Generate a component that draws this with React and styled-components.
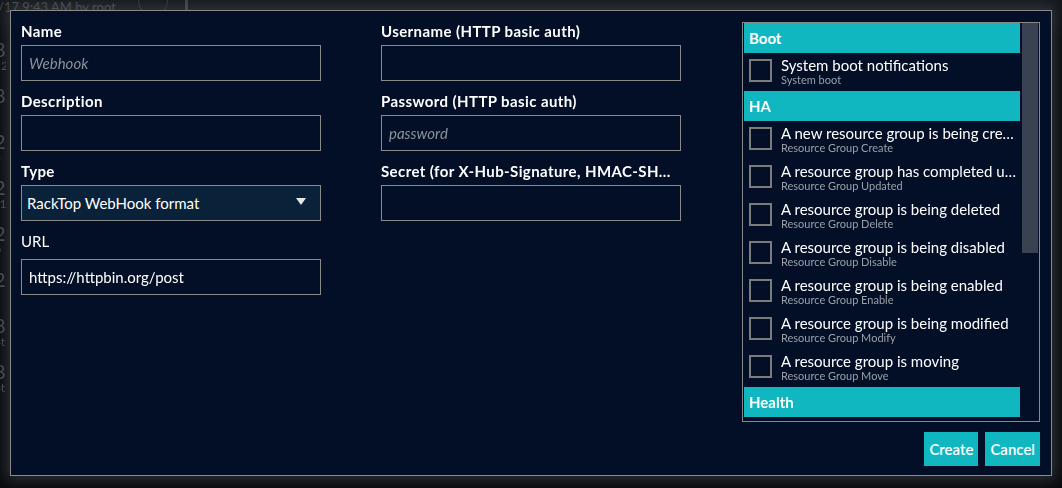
import React from "react";
import styled, { createGlobalStyle } from "styled-components";

const COLORS = {
  page: "#07090d",
  panel: "#020f27",
  field: "#0a213a",
  border: "#8a8a8a",
  teal: "#10b7c0",
  text: "#ffffff",
  muted: "#9aa0a8",
  placeholder: "#8c929b",
};

const FONT = `"Lato", "Noto Sans", "Liberation Sans", sans-serif`;

const GlobalStyle = createGlobalStyle`
  html, body {
    margin: 0;
    padding: 0;
    background: ${COLORS.page};
  }
  * { box-sizing: border-box; }
`;

const SECTIONS = [
  {
    title: "Boot",
    items: [{ title: "System boot notifications", sub: "System boot" }],
  },
  {
    title: "HA",
    items: [
      { title: "A new resource group is being created", sub: "Resource Group Create" },
      { title: "A resource group has completed updating", sub: "Resource Group Updated" },
      { title: "A resource group is being deleted", sub: "Resource Group Delete" },
      { title: "A resource group is being disabled", sub: "Resource Group Disable" },
      { title: "A resource group is being enabled", sub: "Resource Group Enable" },
      { title: "A resource group is being modified", sub: "Resource Group Modify" },
      { title: "A resource group is moving", sub: "Resource Group Move" },
    ],
  },
  {
    title: "Health",
    items: [{ title: "Pool health changed", sub: "Pool Health" }],
  },
];

const BACKDROP_ROWS = [
  ["8", "22"],
  ["8", "y r"],
  ["29", "3"],
  ["29", "/1"],
  ["29", "0 /"],
  ["29", "y r"],
  ["8", "ot"],
  ["8", "ot"],
];

const App = () => (
  <>
    <GlobalStyle />
    <Screen>
      <Backdrop>
        <TopBar>
          <Stamp>/17 9:43 AM by root</Stamp>
          <BinCircle />
          <Divider />
        </TopBar>
        <BackdropList>
          {BACKDROP_ROWS.map(([a, b], i) => (
            <BackdropRow key={i}>
              <span>{a}</span>
              <small>{b}</small>
            </BackdropRow>
          ))}
        </BackdropList>
      </Backdrop>

      <Dialog>
        <Body>
          <Column>
            <Field>
              <Label>Name</Label>
              <Input placeholder="Webhook" />
            </Field>
            <Field>
              <Label>Description</Label>
              <Input />
            </Field>
            <Field>
              <Label>Type</Label>
              <SelectBox>
                <span>RackTop WebHook format</span>
                <Caret viewBox="0 0 10 8">
                  <path d="M0 0 L10 0 L5 7 Z" fill="#e6e6e6" />
                </Caret>
              </SelectBox>
            </Field>
            <Field>
              <Label $plain>URL</Label>
              <Input defaultValue="https://httpbin.org/post" />
            </Field>
          </Column>

          <Column>
            <Field>
              <Label>Username (HTTP basic auth)</Label>
              <Input />
            </Field>
            <Field>
              <Label>Password (HTTP basic auth)</Label>
              <Input placeholder="password" type="password" />
            </Field>
            <Field>
              <Label>Secret (for X-Hub-Signature, HMAC-SHA1)</Label>
              <Input />
            </Field>
          </Column>

          <EventList>
            <ListContent>
              {SECTIONS.map((section) => (
                <React.Fragment key={section.title}>
                  <SectionHeader>{section.title}</SectionHeader>
                  {section.items.map((item) => (
                    <Item key={item.sub}>
                      <Checkbox />
                      <ItemText>
                        <ItemTitle>{item.title}</ItemTitle>
                        <ItemSub>{item.sub}</ItemSub>
                      </ItemText>
                    </Item>
                  ))}
                </React.Fragment>
              ))}
            </ListContent>
            <ScrollTrack>
              <ScrollThumb />
            </ScrollTrack>
          </EventList>
        </Body>

        <Footer>
          <Button>Create</Button>
          <Button>Cancel</Button>
        </Footer>
      </Dialog>
    </Screen>
  </>
);

const Screen = styled.div`
  position: relative;
  width: 1062px;
  height: 488px;
  overflow: hidden;
  font-family: ${FONT};
  background: ${COLORS.page};
`;

const Backdrop = styled.div`
  height: 100%;
  opacity: 0.55;
`;

const TopBar = styled.div`
  height: 40px;
  display: flex;
  align-items: flex-start;
  background: linear-gradient(#1d222b 0, #0b0e13 32px, ${COLORS.page} 40px);
`;

const Stamp = styled.span`
  width: 140px;
  margin-left: -2px;
  color: #777;
  font-size: 13px;
  line-height: 14px;
  white-space: nowrap;
  overflow: hidden;
`;

const BinCircle = styled.div`
  width: 30px;
  height: 30px;
  margin-top: -14px;
  border-radius: 50%;
  border: 1px solid #555;
`;

const Divider = styled.div`
  width: 3px;
  height: 32px;
  margin-left: 17px;
  background: #666;
`;

const BackdropList = styled.div`
  display: flex;
  flex-direction: column;
  width: 12px;
  overflow: hidden;
  margin-left: -6px;
  margin-top: -2px;
`;

const BackdropRow = styled.div`
  display: flex;
  flex-direction: column;
  height: 46px;
  color: #777;
  font-size: 20px;
  line-height: 22px;

  small {
    font-size: 12px;
    line-height: 12px;
  }
`;

const Dialog = styled.div`
  position: absolute;
  left: 10px;
  top: 10px;
  width: 1042px;
  height: 466px;
  display: flex;
  flex-direction: column;
  background: ${COLORS.panel};
  border: 1px solid ${COLORS.border};
  box-shadow: 0 0 14px 4px rgba(120, 125, 135, 0.35);
  padding: 10px 11px 9px 10px;
  color: ${COLORS.text};
`;

const Body = styled.div`
  flex: 1;
  display: flex;
  min-height: 0;
`;

const Column = styled.div`
  width: 300px;
  margin-right: 60px;
  display: flex;
  flex-direction: column;
  gap: 10px;

  &:nth-child(2) {
    margin-right: 61px;
  }
`;

const Field = styled.div`
  display: flex;
  flex-direction: column;
`;

const Label = styled.label`
  font-size: 15px;
  line-height: 20px;
  letter-spacing: ${(p) => (p.$plain ? "0" : "0.4px")};
  font-weight: ${(p) => (p.$plain ? 400 : 700)};
  margin-bottom: ${(p) => (p.$plain ? "8px" : "4px")};
  padding-right: 6px;
  white-space: nowrap;
  overflow: hidden;
  text-overflow: ellipsis;
`;

const Input = styled.input`
  width: 300px;
  height: 36px;
  background: transparent;
  border: 1px solid ${COLORS.border};
  color: ${COLORS.text};
  font-family: ${FONT};
  font-size: 15px;
  padding: 0 7px;
  outline: none;

  &::placeholder {
    color: ${COLORS.placeholder};
    font-style: italic;
  }
`;

const SelectBox = styled.div`
  width: 300px;
  height: 36px;
  display: flex;
  align-items: center;
  justify-content: space-between;
  padding: 0 14px 0 5px;
  background: ${COLORS.field};
  border: 1px solid ${COLORS.border};
  font-size: 15px;
`;

const Caret = styled.svg`
  width: 10px;
  height: 8px;
  margin-top: -2px;
`;

const EventList = styled.div`
  width: 299px;
  height: 400px;
  margin-top: 1px;
  display: flex;
  border: 1px solid ${COLORS.border};
  padding: 0 1px;
  gap: 2px;
  overflow: hidden;
`;

const ListContent = styled.div`
  flex: 1;
  min-width: 0;
  overflow: hidden;
`;

const SectionHeader = styled.div`
  height: 30px;
  display: flex;
  align-items: center;
  padding-left: 5px;
  background: ${COLORS.teal};
  font-size: 15px;
  font-weight: 700;
`;

const Item = styled.div`
  height: 38px;
  display: flex;
  align-items: flex-start;
  padding: 6px 0 0 5px;
`;

const Checkbox = styled.span`
  flex: none;
  width: 23px;
  height: 23px;
  border: 2px solid #7c7c7c;
  margin-right: 9px;
`;

const ItemText = styled.div`
  min-width: 0;
  display: flex;
  flex-direction: column;
  margin-top: -3px;
`;

const ItemTitle = styled.span`
  font-size: 15px;
  line-height: 18px;
  white-space: nowrap;
  overflow: hidden;
  text-overflow: ellipsis;
`;

const ItemSub = styled.span`
  font-size: 11px;
  line-height: 12px;
  color: ${COLORS.muted};
  white-space: nowrap;
`;

const ScrollTrack = styled.div`
  width: 16px;
  flex: none;
`;

const ScrollThumb = styled.div`
  height: 230px;
  background: #3a4252;
`;

const Footer = styled.div`
  display: flex;
  justify-content: flex-end;
  gap: 7px;
  padding-top: 11px;
`;

const Button = styled.button`
  height: 34px;
  padding: 0 5px;
  border: none;
  background: ${COLORS.teal};
  color: ${COLORS.text};
  font-family: ${FONT};
  font-size: 15px;
  font-weight: 600;
  cursor: pointer;
`;

export default App;
